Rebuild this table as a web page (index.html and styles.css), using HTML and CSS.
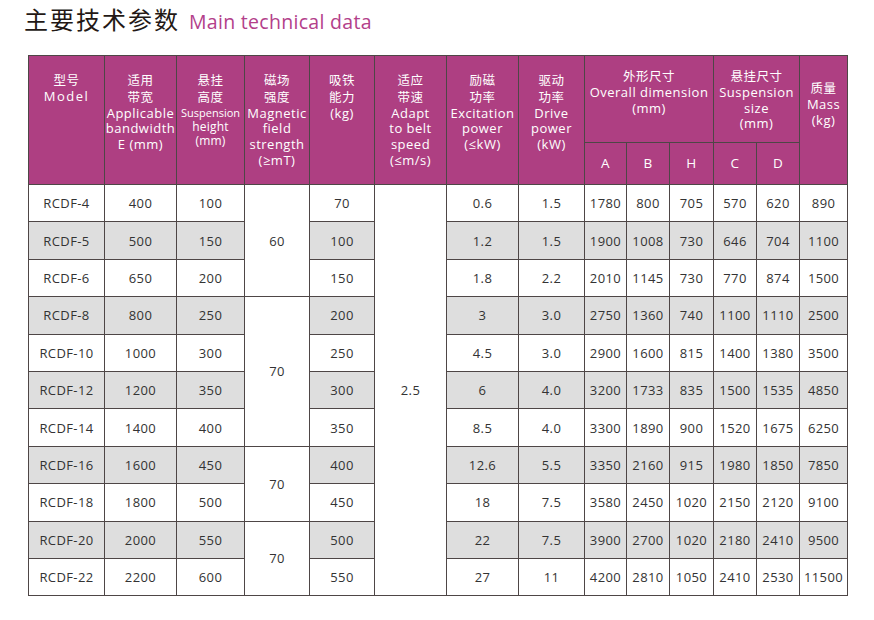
FILE: index.html
```html
<!DOCTYPE html>
<html lang="zh">
<head>
<meta charset="utf-8">
<title>主要技术参数</title>
<link rel="stylesheet" href="styles.css">
</head>
<body>
<div class="page">
  <h1 class="title"><span class="cn">主要技术参数</span><span class="en">Main technical data</span></h1>
  <table class="spec">
    <colgroup>
      <col style="width:76px"><col style="width:72px"><col style="width:68px"><col style="width:65px">
      <col style="width:65px"><col style="width:72px"><col style="width:72px"><col style="width:66px">
      <col style="width:42px"><col style="width:43px"><col style="width:44px"><col style="width:43px">
      <col style="width:43px"><col style="width:48px">
    </colgroup>
    <thead>
      <tr class="h1">
        <th rowspan="2"><span class="zh">型号</span><br><span class="wide">Model</span></th>
        <th rowspan="2"><span class="zh">适用</span><br><span class="zh">带宽</span><br>Applicable<br>bandwidth<br>E (mm)</th>
        <th rowspan="2"><span class="zh">悬挂</span><br><span class="zh">高度</span><div class="small"><span class="tiny">Suspension</span><br>height<br>(mm)</div></th>
        <th rowspan="2"><span class="zh">磁场</span><br><span class="zh">强度</span><br>Magnetic<br>field<br>strength<br>(≥mT)</th>
        <th rowspan="2"><span class="zh">吸铁</span><br><span class="zh">能力</span><br>(kg)</th>
        <th rowspan="2"><span class="zh">适应</span><br><span class="zh">带速</span><br>Adapt<br>to belt<br>speed<br>(≤m/s)</th>
        <th rowspan="2"><span class="zh">励磁</span><br><span class="zh">功率</span><br>Excitation<br>power<br>(≤kW)</th>
        <th rowspan="2"><span class="zh">驱动</span><br><span class="zh">功率</span><br>Drive<br>power<br>(kW)</th>
        <th colspan="3" class="grp"><span class="zh">外形尺寸</span><br>Overall dimension<br>(mm)</th>
        <th colspan="2" class="grp"><span class="zh">悬挂尺寸</span><br>Suspension<br>size<br>(mm)</th>
        <th rowspan="2" class="mass"><span class="zh">质量</span><br>Mass<br>(kg)</th>
      </tr>
      <tr class="h2">
        <th class="sub">A</th><th class="sub">B</th><th class="sub">H</th><th class="sub">C</th><th class="sub">D</th>
      </tr>
    </thead>
    <tbody>
      <tr><td>RCDF-4</td><td>400</td><td>100</td><td rowspan="3" class="span">60</td><td>70</td><td rowspan="11" class="span">2.5</td><td>0.6</td><td>1.5</td><td>1780</td><td>800</td><td>705</td><td>570</td><td>620</td><td>890</td></tr>
      <tr class="alt"><td>RCDF-5</td><td>500</td><td>150</td><td>100</td><td>1.2</td><td>1.5</td><td>1900</td><td>1008</td><td>730</td><td>646</td><td>704</td><td>1100</td></tr>
      <tr><td>RCDF-6</td><td>650</td><td>200</td><td>150</td><td>1.8</td><td>2.2</td><td>2010</td><td>1145</td><td>730</td><td>770</td><td>874</td><td>1500</td></tr>
      <tr class="alt"><td>RCDF-8</td><td>800</td><td>250</td><td rowspan="4" class="span">70</td><td>200</td><td>3</td><td>3.0</td><td>2750</td><td>1360</td><td>740</td><td>1100</td><td>1110</td><td>2500</td></tr>
      <tr><td>RCDF-10</td><td>1000</td><td>300</td><td>250</td><td>4.5</td><td>3.0</td><td>2900</td><td>1600</td><td>815</td><td>1400</td><td>1380</td><td>3500</td></tr>
      <tr class="alt"><td>RCDF-12</td><td>1200</td><td>350</td><td>300</td><td>6</td><td>4.0</td><td>3200</td><td>1733</td><td>835</td><td>1500</td><td>1535</td><td>4850</td></tr>
      <tr><td>RCDF-14</td><td>1400</td><td>400</td><td>350</td><td>8.5</td><td>4.0</td><td>3300</td><td>1890</td><td>900</td><td>1520</td><td>1675</td><td>6250</td></tr>
      <tr class="alt"><td>RCDF-16</td><td>1600</td><td>450</td><td rowspan="2" class="span">70</td><td>400</td><td>12.6</td><td>5.5</td><td>3350</td><td>2160</td><td>915</td><td>1980</td><td>1850</td><td>7850</td></tr>
      <tr><td>RCDF-18</td><td>1800</td><td>500</td><td>450</td><td>18</td><td>7.5</td><td>3580</td><td>2450</td><td>1020</td><td>2150</td><td>2120</td><td>9100</td></tr>
      <tr class="alt"><td>RCDF-20</td><td>2000</td><td>550</td><td rowspan="2" class="span">70</td><td>500</td><td>22</td><td>7.5</td><td>3900</td><td>2700</td><td>1020</td><td>2180</td><td>2410</td><td>9500</td></tr>
      <tr><td>RCDF-22</td><td>2200</td><td>600</td><td>550</td><td>27</td><td>11</td><td>4200</td><td>2810</td><td>1050</td><td>2410</td><td>2530</td><td>11500</td></tr>
    </tbody>
  </table>
</div>
</body>
</html>
```

FILE: styles.css
```css
html, body {
  margin: 0;
  padding: 0;
  background: #ffffff;
}

.page {
  padding: 5px 0 0 28px;
  font-family: "Open Sans", "Noto Sans", "Noto Sans CJK SC", sans-serif;
}

.title {
  margin: 0 0 0 -4px;
  height: 50px;
  font-weight: normal;
  display: flex;
  align-items: baseline;
  gap: 9px;
  line-height: 28px;
}

.title .cn {
  font-family: "Noto Sans CJK SC", sans-serif;
  font-size: 24px;
  letter-spacing: 2px;
  color: #231815;
  font-weight: 400;
}

.title .en {
  font-size: 19.5px;
  color: #b3408a;
  letter-spacing: 0.3px;
}

.spec {
  border-collapse: collapse;
  table-layout: fixed;
  width: 820px;
  color: #333333;
}

.spec th, .spec td {
  border: 1px solid #4e4646;
  text-align: center;
  padding: 0;
}

.spec th {
  background: #ae3f82;
  color: #ffffff;
  font-weight: normal;
  font-size: 13px;
  line-height: 15.8px;
  vertical-align: top;
  padding-top: 16px;
  white-space: nowrap;
  letter-spacing: 0.5px;
}

.spec .zh {
  font-family: "Noto Sans CJK SC", sans-serif;
  font-size: 12.5px;
  letter-spacing: 0.5px;
}

.spec .wide {
  letter-spacing: 1.5px;
}

.spec .small {
  font-size: 12px;
  line-height: 14px;
  padding-top: 0;
  letter-spacing: 0.2px;
}

.spec .tiny {
  font-size: 11px;
  letter-spacing: 0;
}

.spec tr.h1 {
  height: 86px;
}

.spec tr.h2 {
  height: 42px;
}

.spec th.grp {
  padding-top: 12px;
  height: 74px;
}

.spec th.mass {
  padding-top: 24px;
}

.spec th.sub {
  vertical-align: middle;
  padding-top: 0;
  font-size: 13.5px;
}

.spec tbody tr {
  height: 37.4px;
}

.spec td {
  font-size: 13px;
  letter-spacing: 0.4px;
  background: #ffffff;
  vertical-align: middle;
}

.spec tr.alt td {
  background: #dedede;
}

.spec tr.alt td.span,
.spec td.span {
  background: #ffffff;
}
```
